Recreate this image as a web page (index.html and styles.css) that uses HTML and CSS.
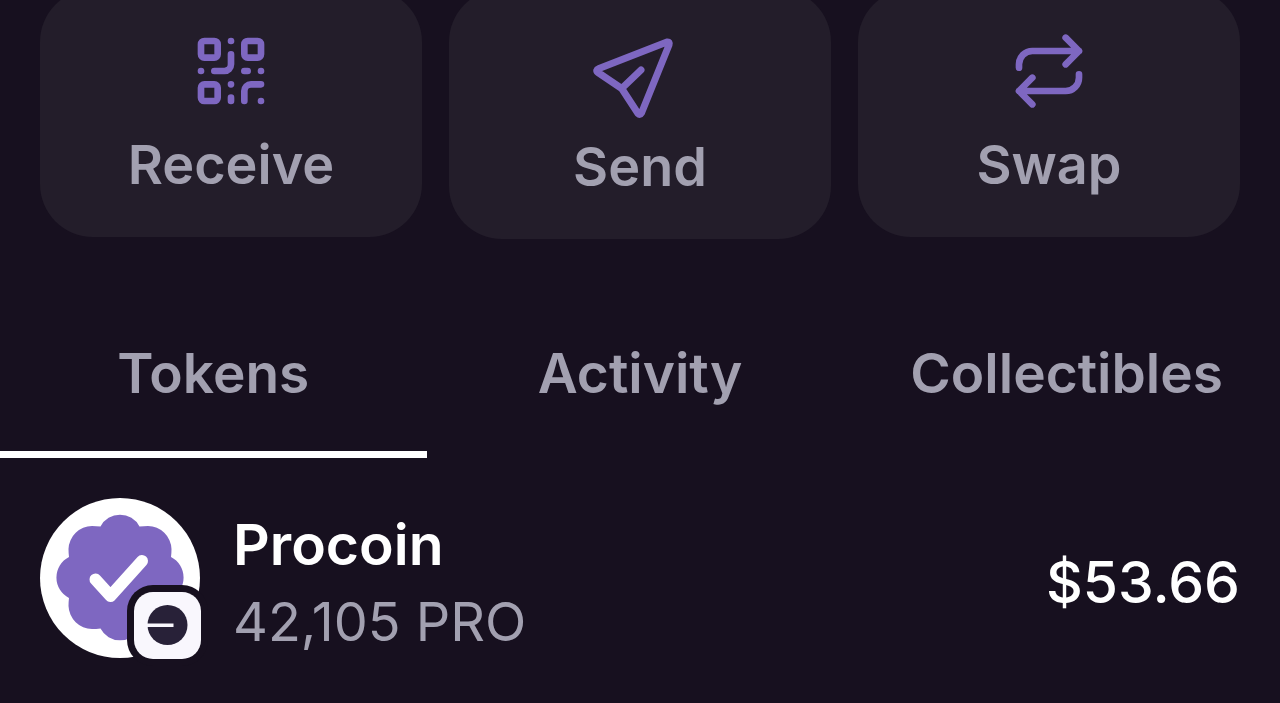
FILE: index.html
```html
<!DOCTYPE html>
<html lang="en">
<head>
<meta charset="utf-8">
<meta name="viewport" content="width=device-width, initial-scale=1">
<title>Wallet</title>
<link rel="stylesheet" href="styles.css">
</head>
<body>
<main class="wallet">
  <section class="actions" aria-label="Actions">
    <button class="action" type="button">
      <svg class="icon" viewBox="0 0 24 24" aria-hidden="true">
        <rect x="3" y="3" width="5" height="5" rx="1"/>
        <rect x="16" y="3" width="5" height="5" rx="1"/>
        <rect x="3" y="16" width="5" height="5" rx="1"/>
        <path d="M21 16h-3a2 2 0 0 0-2 2v3M21 21v.01M12 7v3a2 2 0 0 1-2 2H7M3 12h.01M12 3h.01M12 16v.01M16 12h1M21 12v.01M12 21v-1"/>
      </svg>
      <span>Receive</span>
    </button>
    <button class="action" type="button">
      <svg class="icon icon-send" viewBox="0 0 96 82" aria-hidden="true">
        <path d="M75 11L7 37.500Q3 39 6 41.500L29.700 57.500L46 82.500Q48 84.500 49.500 82L77 14Q78 10.500 75 11ZM29.700 57.500L49 39"/>
      </svg>
      <span>Send</span>
    </button>
    <button class="action" type="button">
      <svg class="icon" viewBox="0 0 24 24" aria-hidden="true">
        <path d="M17 2l4 4-4 4M3 11v-1a4 4 0 0 1 4-4h14M7 22l-4-4 4-4M21 13v1a4 4 0 0 1-4 4H3"/>
      </svg>
      <span>Swap</span>
    </button>
  </section>

  <div class="tabs" role="tablist">
    <button class="tab tab-active" type="button" role="tab" aria-selected="true">Tokens</button>
    <button class="tab" type="button" role="tab" aria-selected="false">Activity</button>
    <button class="tab" type="button" role="tab" aria-selected="false">Collectibles</button>
  </div>

  <section class="token" aria-label="Procoin">
    <div class="coin">
      <svg class="coin-logo" viewBox="0 0 160 160" aria-hidden="true">
        <circle cx="80" cy="80" r="80" fill="#fff"/>
        <path fill="#7e67c1" d="M60.500 28.500A22 22 0 0 1 99.500 28.500Q104 28 108 28A24 24 0 0 1 131.500 51Q131.500 55 131 59A23 23 0 0 1 131 100Q131.500 104 131.500 108A24 24 0 0 1 108 131Q104 131 99.500 130.500A22 22 0 0 1 60.500 130.500Q56 131 52 131A24 24 0 0 1 28.500 108Q28.500 104 29 100A23 23 0 0 1 29 59Q28.500 55 28.500 51A24 24 0 0 1 52 28Q56 28 60.500 28.500Z"/>
        <path fill="none" stroke="#fff" stroke-width="12" stroke-linecap="round" stroke-linejoin="round" d="M55.500 81.500L70.500 98L102 63"/>
      </svg>
      <svg class="coin-chain" viewBox="0 0 67 67" aria-hidden="true">
        <circle cx="33.500" cy="33" r="20" fill="#282138"/>
        <path fill="#f9f7fd" d="M13 31.500H39.500V35H13Z"/>
      </svg>
    </div>
    <div class="token-text">
      <h2 class="token-name">Procoin</h2>
      <p class="token-amount">42,105 PRO</p>
    </div>
    <p class="token-value">$53.66</p>
  </section>
</main>
</body>
</html>
```

FILE: styles.css
```css
* {
  box-sizing: border-box;
}

body {
  margin: 0;
  background: #17101f;
  color: #a2a0b0;
  font-family: Inter, "Liberation Sans", sans-serif;
  font-size: 54px;
  line-height: 68px;
}

button {
  border: 0;
  color: inherit;
  font: inherit;
  font-weight: 600;
  cursor: pointer;
}

h2,
p {
  margin: 0;
}

.wallet {
  display: flow-root;
}

.actions {
  display: grid;
  grid-template-columns: repeat(3, 1fr);
  align-items: start;
  gap: 27px;
  margin-top: -11px;
  padding: 0 40px;
}

.action {
  display: flex;
  flex-direction: column;
  align-items: center;
  gap: 20px;
  padding: 42px 0 38px;
  border-radius: 53px;
  background: #231d2a;
}

.icon {
  width: 80px;
  height: 80px;
  fill: none;
  stroke: #7e67c1;
  stroke-width: 2;
  stroke-linecap: round;
  stroke-linejoin: round;
}

.icon-send {
  width: 96px;
  height: 82px;
  overflow: visible;
  stroke-width: 7;
}

.tabs {
  display: grid;
  grid-template-columns: repeat(3, 1fr);
  margin-top: 60px;
}

.tab {
  padding: 40px 0 44px;
  border-bottom: 7px solid transparent;
  background: none;
  font-size: 55px;
}

.tab-active {
  border-bottom-color: #fff;
}

.token {
  display: flex;
  align-items: center;
  gap: 33px;
  min-height: 170px;
  margin-top: 40px;
  padding: 0 40px;
}

.coin {
  position: relative;
  align-self: flex-start;
  flex: none;
  width: 160px;
  height: 160px;
}

.coin-logo {
  display: block;
  width: 100%;
  height: 100%;
}

.coin-chain {
  position: absolute;
  right: -1px;
  bottom: -1px;
  width: 67px;
  height: 67px;
  border-radius: 19px;
  background: #f9f7fd;
  box-shadow: 0 0 0 7px #17101f;
}

.token-text {
  display: grid;
  gap: 8px;
}

.token-name,
.token-value {
  color: #fff;
  font-size: 57px;
  line-height: 70px;
}

.token-name {
  font-weight: 600;
}

.token-value {
  margin-left: auto;
  font-weight: 500;
}
```
